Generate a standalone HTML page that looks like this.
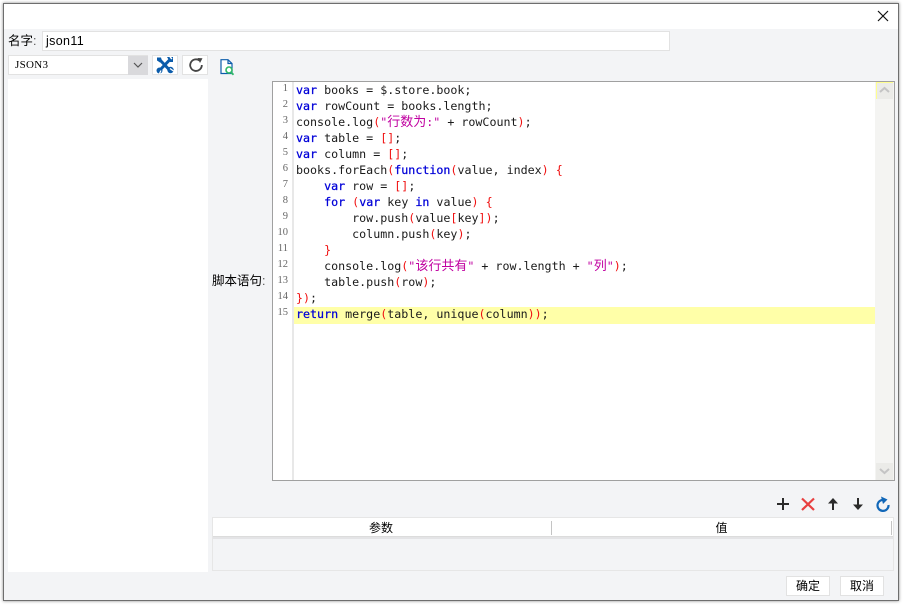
<!DOCTYPE html>
<html><head><meta charset="utf-8">
<style>
html,body{margin:0;padding:0}
body{width:903px;height:605px;background:#fff;position:relative;overflow:hidden;font-family:"Liberation Sans","Noto Sans CJK SC",sans-serif;font-size:12px;color:#000}
.a{position:absolute;box-sizing:border-box}
.code{position:absolute;left:296px;height:16px;white-space:pre;font-family:"DejaVu Sans Mono","Noto Sans CJK SC",monospace;font-size:11.67px;line-height:16px;color:#1a1a1a}
.code i{font-style:normal;color:#0000d8;-webkit-text-stroke:.25px #0000d8}
.code b{font-weight:normal;color:#f01010}
.code s{text-decoration:none;color:#c000a0}
.code u{text-decoration:none;font-family:"Noto Sans CJK SC",sans-serif;font-size:13px;line-height:0;color:#c000a0}
.ln{position:absolute;left:273px;width:15px;text-align:right;font-family:"Liberation Serif",serif;font-size:10.5px;line-height:16px;color:#666}
.btn{background:#fff;border:1px solid #e2e2e2}
</style></head><body>
<div class="a" style="left:3px;top:3px;width:896px;height:598px;background:#f3f4f6;border:1px solid #6e6e6e;box-shadow:0 0 3px #888"></div>
<div class="a" style="left:4px;top:4px;width:894px;height:25px;background:#fff"></div>
<svg class="a" style="left:877px;top:10px" width="12" height="12"><path d="M1 1L11 11M11 1L1 11" stroke="#111" stroke-width="1.2"/></svg>

<div class="a" style="left:8px;top:33px;line-height:16px;font-size:12.5px">名字<span style="color:#555">:</span></div>
<div class="a" style="left:42px;top:31px;width:628px;height:20px;background:#fff;border:1px solid #e2e2e2;padding-left:3px;line-height:18px;font-size:12.5px;letter-spacing:.35px">json11</div>

<div class="a btn" style="left:8px;top:55px;width:140px;height:20px"></div>
<div class="a" style="left:128px;top:56px;width:20px;height:19px;background:#d9d9dc"></div>
<svg class="a" style="left:133px;top:62px" width="10" height="6"><path d="M1 1L5 5L9 1" fill="none" stroke="#555" stroke-width="1.2"/></svg>
<div class="a" style="left:15px;top:57px;line-height:16px;font-family:'Liberation Serif',serif;font-size:11px;letter-spacing:.3px">JSON3</div>

<div class="a btn" style="left:152px;top:55px;width:26px;height:20px"></div>
<svg class="a" style="left:156px;top:56px" width="18" height="18" viewBox="0 0 18 18"><path d="M3.500 3.500L15 15.500M14.500 3L3 15" stroke="#0b5cab" stroke-width="3" fill="none"/><path d="M1 1.500L5 1.500L6 5L4 6.500L1 4.500Z" fill="#0b5cab"/><path d="M11 1L17 1L17 6L14 6Z" fill="#0b5cab"/><circle cx="14.500" cy="14" r="3.200" fill="#0b5cab"/><circle cx="3.500" cy="14.500" r="3" fill="#0b5cab"/><path d="M14 12.500L17.500 15M3.500 17.500L5 14.500" stroke="#fff" stroke-width="1.300"/><path d="M14 1L16 3" stroke="#fff" stroke-width="1.500"/></svg>
<div class="a btn" style="left:182px;top:55px;width:26px;height:20px"></div>
<svg class="a" style="left:188px;top:57px" width="16" height="16" viewBox="0 0 16 16"><path d="M11.500 3.500A5.800 5.800 0 1 0 13.800 8" fill="none" stroke="#444" stroke-width="1.800"/><path d="M9.500 1L14.500 1.200L12 6Z" fill="#444"/></svg>
<svg class="a" style="left:220px;top:59px" width="15" height="17" viewBox="0 0 15 17"><path d="M1 .7H8L12 4.500V14.500H1Z M8 .7V4.500H12" fill="#fff" stroke="#0b5cab" stroke-width="1.200"/><circle cx="9" cy="11" r="3" fill="#fff" stroke="#30b868" stroke-width="1.600"/><path d="M11 13.200L13.500 15.800" stroke="#30b868" stroke-width="1.800"/></svg>

<div class="a" style="left:8px;top:79px;width:200px;height:493px;background:#fff"></div>
<div class="a" style="left:212px;top:273px;line-height:16px;font-size:12.5px">脚本语句<span style="color:#555">:</span></div>

<div class="a" style="left:272px;top:81px;width:623px;height:400px;background:#fff;border:1px solid #a0a0a0"></div>
<div class="a" style="left:292px;top:82px;width:2px;height:398px;background:#e8e8e8"></div>
<div class="a" style="left:294px;top:307px;width:581px;height:17px;background:#ffffa8"></div>
<div class="a" style="left:875px;top:82px;width:19px;height:398px;background:#f4f4f2"></div>
<div class="a" style="left:876px;top:82px;width:17px;height:17px;background:#ebebe8;border-left:1px solid #ffff90;border-top:1px solid #ffff90"></div>
<div class="a" style="left:876px;top:463px;width:17px;height:17px;background:#ebebe8"></div>
<svg class="a" style="left:879px;top:86px" width="11" height="8"><path d="M1 6L5.500 2L10 6" fill="none" stroke="#c4c4c4" stroke-width="2"/></svg>
<svg class="a" style="left:879px;top:467px" width="11" height="8"><path d="M1 2L5.500 6L10 2" fill="none" stroke="#c4c4c4" stroke-width="2"/></svg>

<div class="ln" style="top:81px">1</div><div class="ln" style="top:97px">2</div><div class="ln" style="top:113px">3</div><div class="ln" style="top:129px">4</div><div class="ln" style="top:145px">5</div><div class="ln" style="top:161px">6</div><div class="ln" style="top:177px">7</div><div class="ln" style="top:193px">8</div><div class="ln" style="top:209px">9</div><div class="ln" style="top:225px">10</div><div class="ln" style="top:241px">11</div><div class="ln" style="top:257px">12</div><div class="ln" style="top:273px">13</div><div class="ln" style="top:289px">14</div><div class="ln" style="top:305px">15</div>

<div class="code" style="top:82px"><i>var</i> books = $.store.book;</div>
<div class="code" style="top:98px"><i>var</i> rowCount = books.length;</div>
<div class="code" style="top:114px">console.log<b>(</b><s>"</s><u>行数为</u><s>:"</s> + rowCount<b>)</b>;</div>
<div class="code" style="top:130px"><i>var</i> table = <b>[]</b>;</div>
<div class="code" style="top:146px"><i>var</i> column = <b>[]</b>;</div>
<div class="code" style="top:162px">books.forEach<b>(</b><i>function</i><b>(</b>value, index<b>)</b> <b>{</b></div>
<div class="code" style="top:178px">    <i>var</i> row = <b>[]</b>;</div>
<div class="code" style="top:194px">    <i>for</i> <b>(</b><i>var</i> key <i>in</i> value<b>)</b> <b>{</b></div>
<div class="code" style="top:210px">        row.push<b>(</b>value<b>[</b>key<b>])</b>;</div>
<div class="code" style="top:226px">        column.push<b>(</b>key<b>)</b>;</div>
<div class="code" style="top:242px">    <b>}</b></div>
<div class="code" style="top:258px">    console.log<b>(</b><s>"</s><u>该行共有</u><s>"</s> + row.length + <s>"</s><u>列</u><s>"</s><b>)</b>;</div>
<div class="code" style="top:274px">    table.push<b>(</b>row<b>)</b>;</div>
<div class="code" style="top:290px"><b>})</b>;</div>
<div class="code" style="top:306px"><i>return</i> merge<b>(</b>table, unique<b>(</b>column<b>))</b>;</div>

<svg class="a" style="left:775px;top:495px" width="118" height="18" viewBox="0 0 118 18">
<path d="M2 9H14M8 3V15" stroke="#2b2b2b" stroke-width="2"/>
<path d="M27 3.500L39 15M39 3.500L27 15" stroke="#e84040" stroke-width="2.200"/>
<path d="M58 15V5" stroke="#2b2b2b" stroke-width="2"/><path d="M53 8.500L58 3L63 8.500Z" fill="#2b2b2b"/>
<path d="M83 3V13" stroke="#2b2b2b" stroke-width="2"/><path d="M78 9.500L83 15L88 9.500Z" fill="#2b2b2b"/>
<path d="M110.500 5.500A5.500 5.500 0 1 0 113.500 10" fill="none" stroke="#1167b8" stroke-width="2.200"/><path d="M106 1.500L112.500 4.500L108 9Z" fill="#1167b8"/>
</svg>

<div class="a" style="left:212px;top:517px;width:682px;height:54px;border:1px solid #e6e6e6;background:#f3f4f6"></div>
<div class="a" style="left:213px;top:518px;width:680px;height:19px;background:#fff;border-bottom:1px solid #dcdcdc"></div>
<div class="a" style="left:213px;top:537px;width:680px;height:2px;background:#e4e4e6"></div>
<div class="a" style="left:551px;top:521px;width:1px;height:14px;background:#c4c4c4"></div>
<div class="a" style="left:891px;top:521px;width:1px;height:14px;background:#c4c4c4"></div>
<div class="a" style="left:212px;top:520px;width:338px;text-align:center;line-height:16px;font-size:12px">参数</div>
<div class="a" style="left:552px;top:520px;width:339px;text-align:center;line-height:16px;font-size:12px">值</div>

<div class="a btn" style="left:786px;top:576px;width:44px;height:20px;text-align:center;line-height:18px;font-size:12px">确定</div>
<div class="a btn" style="left:840px;top:576px;width:44px;height:20px;text-align:center;line-height:18px;font-size:12px">取消</div>
</body></html>
